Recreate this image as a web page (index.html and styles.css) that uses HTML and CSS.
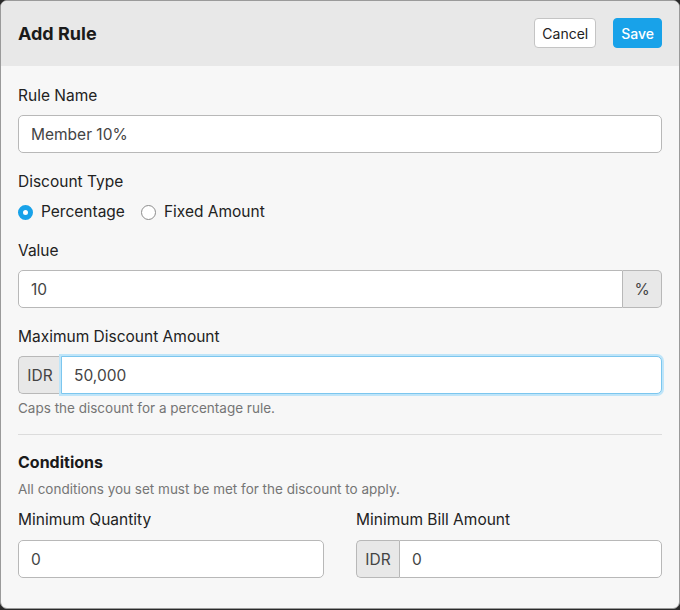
FILE: index.html
```html
<!DOCTYPE html>
<html lang="en">
<head>
    <meta charset="UTF-8">
    <meta name="viewport" content="width=device-width, initial-scale=1.0">
    <title>Add Rule</title>
    <link rel="stylesheet" href="styles.css">
</head>
<body>

<div class="dialog">
    <div class="dialog-header">
        <h2>Add Rule</h2>
        <div class="actions">
            <button type="button" class="btn btn-cancel">Cancel</button>
            <button type="submit" class="btn btn-save">Save</button>
        </div>
    </div>

    <form class="dialog-body">
        <div class="field">
            <label for="rulename">Rule Name</label>
            <input type="text" id="rulename" class="input" value="Member 10%">
        </div>

        <div class="field">
            <label>Discount Type</label>
            <div class="radio-row">
                <label class="radio-option">
                    <span class="radio checked"></span> Percentage
                </label>
                <label class="radio-option">
                    <span class="radio"></span> Fixed Amount
                </label>
            </div>
        </div>

        <div class="field">
            <label for="value">Value</label>
            <div class="input-group">
                <input type="text" id="value" class="input" value="10">
                <span class="addon addon-right">%</span>
            </div>
        </div>

        <div class="field field-tight">
            <label for="maxdiscount">Maximum Discount Amount</label>
            <div class="input-group">
                <span class="addon addon-left">IDR</span>
                <input type="text" id="maxdiscount" class="input focused" value="50,000">
            </div>
            <p class="help">Caps the discount for a percentage rule.</p>
        </div>

        <hr>

        <h3>Conditions</h3>
        <p class="help help-section">All conditions you set must be met for the discount to apply.</p>

        <div class="columns">
            <div class="field">
                <label for="minqty">Minimum Quantity</label>
                <input type="text" id="minqty" class="input" value="0">
            </div>
            <div class="field">
                <label for="minbill">Minimum Bill Amount</label>
                <div class="input-group">
                    <span class="addon addon-left">IDR</span>
                    <input type="text" id="minbill" class="input" value="0">
                </div>
            </div>
        </div>
    </form>
</div>

</body>
</html>
```

FILE: styles.css
```css
body {
    margin: 0;
    font-family: Inter, 'Noto Sans', sans-serif;
    background-color: #2a2a2a;
    color: #1f1f1f;
}

.dialog {
    width: 680px;
    height: 609px;
    box-sizing: border-box;
    border: 1px solid #9a9a9a;
    border-radius: 7px;
    overflow: hidden;
    background: #f7f7f7;
}

.dialog-header {
    height: 65px;
    background: #e8e8e8;
    display: flex;
    align-items: center;
    justify-content: space-between;
    padding: 0 17px;
}

.dialog-header h2 {
    margin: 0;
    font-size: 18px;
    font-weight: 700;
    color: #1a1a1a;
}

.actions {
    display: flex;
    gap: 17px;
    margin-top: -1px;
}

.btn {
    height: 30px;
    padding: 0 7px;
    font-family: inherit;
    font-size: 14px;
    border-radius: 4px;
    cursor: pointer;
}

.btn-cancel {
    background: #fff;
    border: 1px solid #c4c4c4;
    color: #222;
}

.btn-save {
    background: #18a2e9;
    border: 1px solid #18a2e9;
    color: #fff;
    font-weight: 500;
}

.dialog-body {
    padding: 20px 17px 0;
}

label {
    display: block;
    font-size: 15.5px;
    line-height: 20px;
    margin-bottom: 9px;
    color: #222;
}

.field {
    margin-bottom: 19px;
}

.field-tight {
    margin-bottom: 0;
}

.input {
    width: 100%;
    height: 38px;
    box-sizing: border-box;
    padding: 0 12px;
    border: 1px solid #b8b8b8;
    border-radius: 5px;
    background: #fff;
    font-family: inherit;
    font-size: 15.5px;
    color: #444;
    outline: none;
}

.input-group {
    display: flex;
}

.input-group .input {
    flex: 1;
    min-width: 0;
}

.addon {
    display: flex;
    align-items: center;
    justify-content: center;
    background: #e8e8e8;
    border: 1px solid #b8b8b8;
    font-size: 15.5px;
    color: #444;
}

.addon-left {
    width: 42px;
    border-radius: 5px 0 0 5px;
    border-right: none;
}

.addon-left + .input {
    border-top-left-radius: 0;
    border-bottom-left-radius: 0;
}

.addon-right {
    width: 38px;
    border-radius: 0 5px 5px 0;
    border-left: none;
}

.input-group .input:first-child {
    border-top-right-radius: 0;
    border-bottom-right-radius: 0;
}

.input.focused {
    border-color: #7cc6ee;
    box-shadow: 0 0 0 2px #bfe5f9;
    position: relative;
}

.radio-row {
    display: flex;
    gap: 16px;
    margin-top: 10px;
}

.radio-option {
    display: flex;
    align-items: center;
    gap: 8px;
    margin: 0;
}

.radio {
    width: 15px;
    height: 15px;
    box-sizing: border-box;
    border-radius: 50%;
    border: 1px solid #8c8c8c;
    background: #fff;
}

.radio.checked {
    border: 5px solid #18a2e9;
}

.help {
    margin: 5px 0 0;
    font-size: 13.5px;
    line-height: 18px;
    color: #757575;
}

hr {
    border: none;
    border-top: 1px solid #dcdcdc;
    margin: 17px 0 17px;
}

h3 {
    margin: 0;
    font-size: 16px;
    line-height: 20px;
    font-weight: 700;
    color: #1a1a1a;
}

.help-section {
    margin: 8px 0 12px;
}

.columns {
    display: grid;
    grid-template-columns: 1fr 1fr;
    gap: 32px;
}

.columns label {
    margin-bottom: 10px;
}
```
